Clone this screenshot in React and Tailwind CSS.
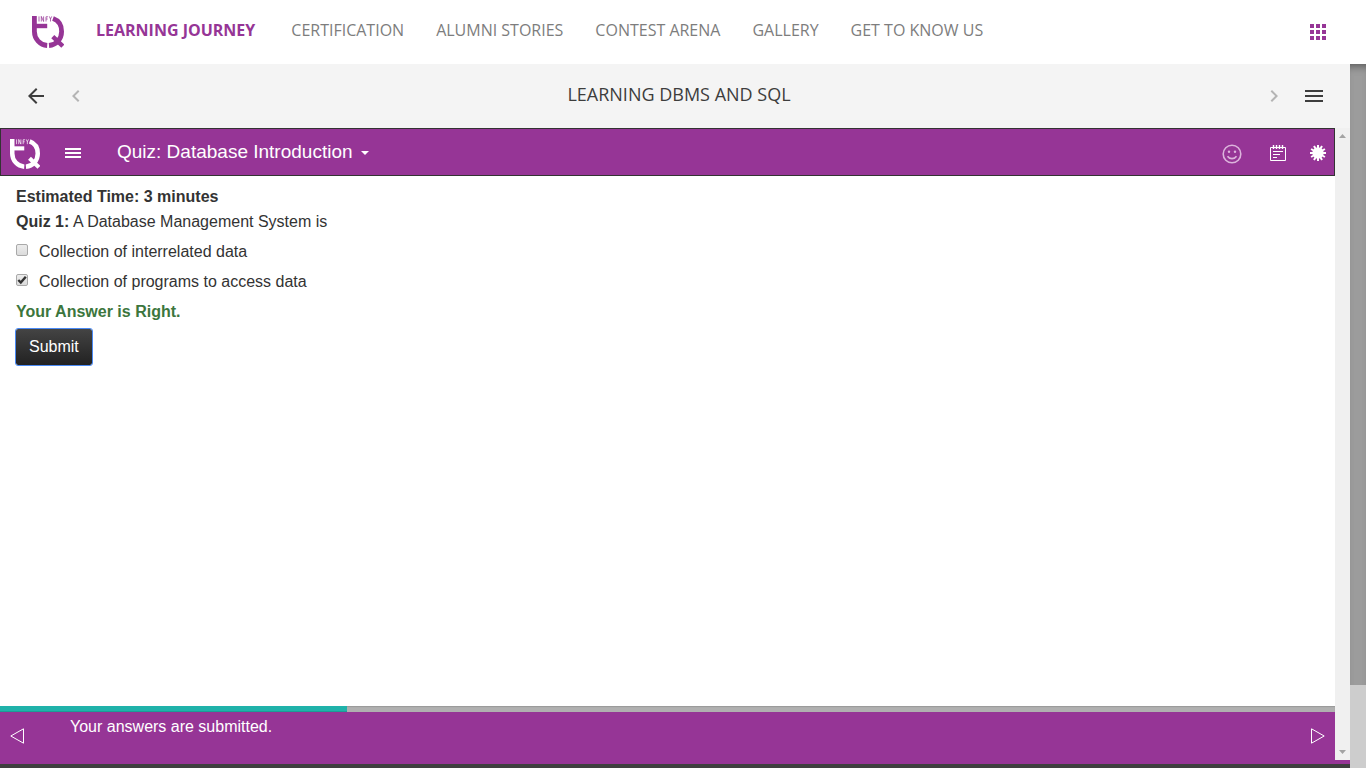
import { useState } from "react";

const navItems = [
  "CERTIFICATION",
  "ALUMNI STORIES",
  "CONTEST ARENA",
  "GALLERY",
  "GET TO KNOW US",
];

function Logo({ className }) {
  return (
    <svg viewBox="0 0 32 32" className={className} fill="none" stroke="currentColor" aria-hidden="true">
      <path d="M2.400 0V15.500C2.400 23 8 29 15.200 29.500" strokeWidth="4.800" />
      <path d="M2.400 10H15.200" strokeWidth="4.400" />
      <path d="M21 2.600C26.500 4.600 29.600 9.500 29.600 15.500C29.600 23 24.400 28.800 17 29.500" strokeWidth="4.800" />
      <path d="M20.800 20.600L30.800 30.200" strokeWidth="4.400" />
      <path
        d="M7 .4V5.500M9.300 5.500V.4L11.600 5.500V.4M16 .8H14V5.500M14 3H15.700M17.300 .4L18.500 3V5.500M19.700 .4L18.500 3"
        strokeWidth=".9"
        opacity=".85"
      />
    </svg>
  );
}

function TopNav() {
  return (
    <header className="flex h-16 shrink-0 items-center bg-white pl-8 pr-10">
      <a href="#home" aria-label="Home" className="text-[#963596]">
        <Logo className="size-8" />
      </a>
      <nav className="ml-8 flex gap-8 pb-1 font-['Open_Sans',sans-serif] text-base text-[#7d7d7d]">
        <a href="#learning" className="pr-1 font-bold text-[#963596]">LEARNING JOURNEY</a>
        {navItems.map((item) => (
          <a key={item} href="#section">{item}</a>
        ))}
      </nav>
      <button type="button" aria-label="Apps" className="ml-auto text-[#963596]">
        <svg viewBox="0 0 16 16" className="size-4" fill="currentColor" aria-hidden="true">
          <path d="M0 0h4v4H0zM6 0h4v4H6zM12 0h4v4h-4zM0 6h4v4H0zM6 6h4v4H6zM12 6h4v4h-4zM0 12h4v4H0zM6 12h4v4H6zM12 12h4v4h-4z" />
        </svg>
      </button>
    </header>
  );
}

function CourseBar() {
  return (
    <div className="flex h-16 shrink-0 items-center bg-[#f4f4f4] px-6 text-[#3d3d3d]">
      <button type="button" aria-label="Back">
        <svg viewBox="0 0 24 24" className="size-6" fill="currentColor" aria-hidden="true">
          <path d="M20 11H7.830l5.590-5.590L12 4l-8 8 8 8 1.410-1.410L7.830 13H20v-2z" />
        </svg>
      </button>
      <button type="button" aria-label="Previous" className="ml-4 text-[#b4b4b4]">
        <svg viewBox="0 0 24 24" className="size-6" fill="currentColor" aria-hidden="true">
          <path d="M15.410 7.410L14 6l-6 6 6 6 1.410-1.410L10.830 12z" />
        </svg>
      </button>
      <h1 className="flex-1 pb-1 pl-2 text-center font-['Open_Sans',sans-serif] text-lg">
        LEARNING DBMS AND SQL
      </h1>
      <button type="button" aria-label="Next" className="mr-4 text-[#b4b4b4]">
        <svg viewBox="0 0 24 24" className="size-6" fill="currentColor" aria-hidden="true">
          <path d="M10 6L8.590 7.410 13.170 12l-4.580 4.590L10 18l6-6z" />
        </svg>
      </button>
      <button type="button" aria-label="Contents" className="px-[3px]">
        <svg viewBox="0 0 18 12" className="h-3 w-[18px]" fill="currentColor" aria-hidden="true">
          <path d="M0 0h18v2H0zM0 5h18v2H0zM0 10h18v2H0z" />
        </svg>
      </button>
    </div>
  );
}

function QuizBar() {
  return (
    <div className="flex h-12 shrink-0 items-center border border-[#333333] bg-[#963596] px-2 text-white">
      <Logo className="ml-px mt-1 size-[30px]" />
      <button type="button" aria-label="Menu" className="ml-6 mt-0.5">
        <svg viewBox="0 0 18 10" className="h-2.5 w-[18px]" fill="currentColor" aria-hidden="true">
          <path d="M1 0h16v2H1zM1 4h16v2H1zM1 8h16v2H1z" />
        </svg>
      </button>
      <button type="button" className="ml-[35px] flex items-center gap-2 text-[19px]">
        Quiz: Database Introduction
        <svg viewBox="0 0 8 4" className="mt-0.5 h-1 w-2" fill="currentColor" aria-hidden="true">
          <path d="M0 0h8L4 4z" />
        </svg>
      </button>
      <button type="button" aria-label="Feedback" className="ml-auto mt-1">
        <svg viewBox="0 0 20 20" className="size-5" fill="none" stroke="#dcb4dc" strokeWidth="1.600" aria-hidden="true">
          <circle cx="10" cy="10" r="8.800" />
          <path d="M5.500 12.300C7.500 15.400 12.500 15.400 14.500 12.300" />
          <circle cx="7" cy="7.800" r="1.200" fill="#dcb4dc" stroke="none" />
          <circle cx="13" cy="7.800" r="1.200" fill="#dcb4dc" stroke="none" />
        </svg>
      </button>
      <button type="button" aria-label="Notes" className="ml-7 mt-0.5">
        <svg viewBox="0 0 16 16" className="size-4" fill="none" stroke="currentColor" aria-hidden="true">
          <path d="M.5 2.500h15v13H.5z" />
          <path d="M3.500 0v4M6.500 0v4M9.500 0v4M12.500 0v4" strokeWidth="1.400" />
          <path d="M3 6.500h10M3 9.500h7M3 12.500h4" />
        </svg>
      </button>
      <button type="button" aria-label="Settings" className="ml-6 mt-0.5">
        <svg viewBox="0 0 16 16" className="size-4" fill="currentColor" stroke="currentColor" aria-hidden="true">
          <circle cx="8" cy="8" r="5.700" stroke="none" />
          <path d="M8 0V16M0 8H16M4 1.100L12 14.900M12 1.100L4 14.900M1.100 4L14.900 12M14.900 4L1.100 12" strokeWidth="2" />
        </svg>
      </button>
    </div>
  );
}

function Option({ label, checked, onChange }) {
  return (
    <label className="flex items-center text-[#333333]">
      <span className="relative mr-[11px] mb-1 flex size-3">
        <input
          type="checkbox"
          checked={checked}
          onChange={onChange}
          className="size-3 appearance-none rounded-[2px] border border-[#a9a9a9] bg-linear-to-b from-[#ececec] to-[#dcdcdc]"
        />
        {checked && (
          <svg viewBox="0 0 12 12" className="pointer-events-none absolute inset-0 size-3" fill="none" stroke="#333" strokeWidth="2.400" aria-hidden="true">
            <path d="M2.300 6L4.800 8.500L9.800 2.700" />
          </svg>
        )}
      </span>
      {label}
    </label>
  );
}

function Quiz() {
  const [answers, setAnswers] = useState([false, true]);
  const toggle = (i) => setAnswers(answers.map((a, j) => (i === j ? !a : a)));

  return (
    <main className="flex-1 bg-white px-4 pt-2 text-base text-[#333333]">
      <p className="leading-[25px] font-bold">Estimated Time: 3 minutes</p>
      <p className="leading-[25px]"><b>Quiz 1:</b> A Database Management System is</p>
      <div className="mt-1.5 flex flex-col gap-1.5">
        <Option label="Collection of interrelated data" checked={answers[0]} onChange={() => toggle(0)} />
        <Option label="Collection of programs to access data" checked={answers[1]} onChange={() => toggle(1)} />
        <p className="font-bold text-[#3c763d]">Your Answer is Right.</p>
      </div>
      <button
        type="button"
        className="mt-[5px] h-9 rounded-[2px] bg-linear-to-b from-[#444444] to-[#222222] px-[13px] text-white outline outline-[#4a8af4]"
      >
        Submit
      </button>
    </main>
  );
}

function QuizFooter() {
  return (
    <footer className="shrink-0">
      <div className="h-1.5 bg-[#b0b0b0] shadow-[inset_0_1px_1px_#9a9a9a]">
        <div className="h-full w-[26%] bg-[#20b2aa] shadow-[inset_0_-1px_0_#1c9c96]" />
      </div>
      <div className="flex h-12 bg-[#963596] px-2.5 text-white">
        <button type="button" aria-label="Previous page" className="self-center">
          <svg viewBox="0 0 14 16" className="h-4 w-3.5" fill="none" stroke="currentColor" aria-hidden="true">
            <path d="M.8 8L13.500 .8V15.200Z" />
          </svg>
        </button>
        <p className="ml-[46px] mt-[3px] flex-1">Your answers are submitted.</p>
        <button type="button" aria-label="Next page" className="self-center">
          <svg viewBox="0 0 14 16" className="h-4 w-3.5" fill="none" stroke="currentColor" aria-hidden="true">
            <path d="M13.200 8L.5 .8V15.200Z" />
          </svg>
        </button>
      </div>
    </footer>
  );
}

function InnerScrollbar() {
  return (
    <div className="flex w-[15px] shrink-0 flex-col items-center justify-between bg-[#f0f0f0] py-1.5 text-[#a3a3a3]">
      <svg viewBox="0 0 7 4" className="h-1 w-[7px]" fill="currentColor" aria-hidden="true">
        <path d="M0 4L3.500 0L7 4z" />
      </svg>
      <svg viewBox="0 0 7 4" className="h-1 w-[7px]" fill="currentColor" aria-hidden="true">
        <path d="M0 0L3.500 4L7 0z" />
      </svg>
    </div>
  );
}

export default function App() {
  return (
    <div className="flex h-screen flex-col bg-white font-['Liberation_Sans',Arial,sans-serif]">
      <TopNav />
      <div className="flex min-h-0 flex-1">
        <div className="flex min-w-0 flex-1 flex-col">
          <CourseBar />
          <div className="flex min-h-0 flex-1">
            <div className="flex min-w-0 flex-1 flex-col">
              <QuizBar />
              <Quiz />
              <QuizFooter />
            </div>
            <InnerScrollbar />
          </div>
          <div className="h-1 shrink-0 bg-[#963596]" />
          <div className="h-1 shrink-0 bg-[#3f3f3f]" />
        </div>
        <div className="w-4 shrink-0 bg-[#cdcdcd]">
          <div className="h-[88.2%] bg-[#9c9c9c] shadow-[inset_0_8px_8px_-6px_#555555]" />
        </div>
      </div>
    </div>
  );
}
